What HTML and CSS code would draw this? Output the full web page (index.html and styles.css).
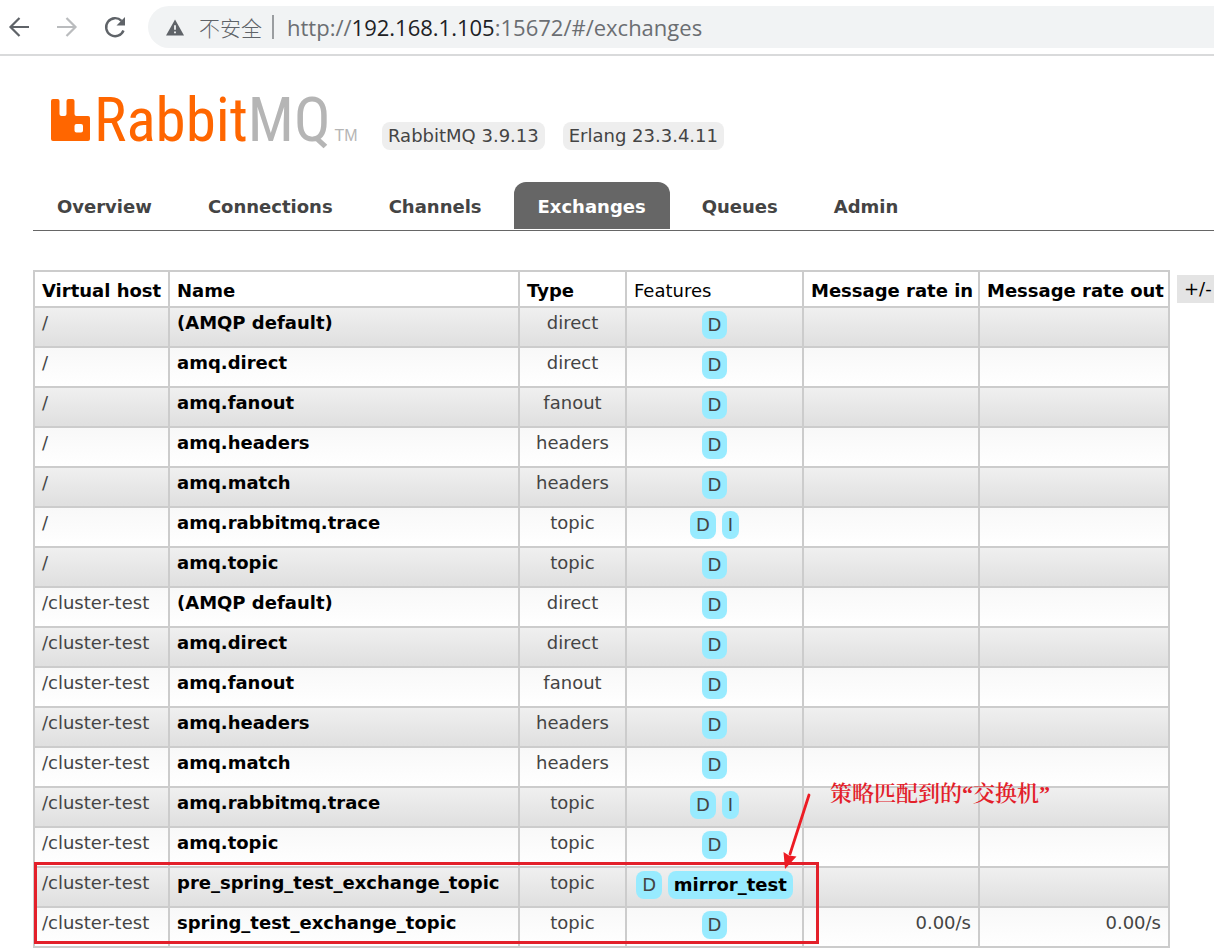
FILE: index.html
```html
<!DOCTYPE html>
<html lang="en">
<head>
<meta charset="utf-8">
<title>RabbitMQ Management</title>
<link rel="stylesheet" href="styles.css">
</head>
<body>
<div class="toolbar">
  <button class="tool" type="button" aria-label="Back"><svg width="24" height="24" viewBox="0 0 24 24" fill="none" stroke="#5f6368" stroke-width="2.2"><path d="M22 12H4M12.500 3L3.500 12l9 9"/></svg></button>
  <button class="tool" type="button" aria-label="Forward"><svg width="24" height="24" viewBox="0 0 24 24" fill="none" stroke="#babcbe" stroke-width="2.2"><path d="M2 12h18M11.500 3l9 9-9 9"/></svg></button>
  <button class="tool" type="button" aria-label="Reload"><svg width="24" height="24" viewBox="0 0 24 24" fill="none" stroke="#5f6368" stroke-width="2.400"><path d="M20.500 15.500A9 9 0 1 1 18.500 5.800"/><path d="M22 2v8.500h-8.500z" fill="#5f6368" stroke="none"/></svg></button>
  <div class="address">
    <svg class="warn" width="18" height="17" viewBox="0 0 20 18"><path fill="#5f6368" d="M10 0l10 18H0z"/><path stroke="#f1f3f4" stroke-width="2" d="M10 6.500v5M10 13.500v2"/></svg>
    <span class="insecure">不安全</span>
    <span class="divider"></span>
    <span class="url">http://<b>192.168.1.105</b>:15672/#/exchanges</span>
  </div>
</div>

<div class="page">
  <header class="head">
    <a class="logo" href="#/" aria-label="RabbitMQ">
      <svg width="40" height="43" viewBox="0 0 40 43"><path fill="#f60" fill-rule="evenodd" d="M2 0h4.500a2 2 0 0 1 2 2v13a2 2 0 0 0 2 2h3a2 2 0 0 0 2-2V2a2 2 0 0 1 2-2h4a2 2 0 0 1 2 2v13a2 2 0 0 0 2 2H37a2 2 0 0 1 2 2v21a2 2 0 0 1-2 2H2a2 2 0 0 1-2-2V2a2 2 0 0 1 2-2zM25.500 25a2 2 0 0 0-2 2v4.500a2 2 0 0 0 2 2H30a2 2 0 0 0 2-2V27a2 2 0 0 0-2-2z"/></svg>
      <span class="word">Rabbit<span class="mq">MQ</span></span><span class="tm">TM</span>
    </a>
    <span class="version">RabbitMQ 3.9.13</span>
    <span class="version">Erlang 23.3.4.11</span>
  </header>

  <nav class="tabs">
    <a href="#/">Overview</a>
    <a href="#/connections">Connections</a>
    <a href="#/channels">Channels</a>
    <a class="selected" href="#/exchanges">Exchanges</a>
    <a href="#/queues">Queues</a>
    <a href="#/users">Admin</a>
  </nav>

  <main class="listing">
    <div class="table-area">
      <table class="list">
        <colgroup><col class="c-host"><col class="c-name"><col class="c-type"><col class="c-feat"><col class="c-in"><col class="c-out"></colgroup>
        <thead>
          <tr><th><a href="#vhost">Virtual host</a></th><th><a href="#name">Name</a></th><th><a href="#type">Type</a></th><th class="plain">Features</th><th><a href="#in">Message rate in</a></th><th><a href="#out">Message rate out</a></th></tr>
        </thead>
        <tbody>
          <tr><td>/</td><td><a href="#e1">(AMQP default)</a></td><td class="c">direct</td><td class="c"><span class="tag">D</span></td><td class="r"></td><td class="r"></td></tr>
          <tr><td>/</td><td><a href="#e2">amq.direct</a></td><td class="c">direct</td><td class="c"><span class="tag">D</span></td><td class="r"></td><td class="r"></td></tr>
          <tr><td>/</td><td><a href="#e3">amq.fanout</a></td><td class="c">fanout</td><td class="c"><span class="tag">D</span></td><td class="r"></td><td class="r"></td></tr>
          <tr><td>/</td><td><a href="#e4">amq.headers</a></td><td class="c">headers</td><td class="c"><span class="tag">D</span></td><td class="r"></td><td class="r"></td></tr>
          <tr><td>/</td><td><a href="#e5">amq.match</a></td><td class="c">headers</td><td class="c"><span class="tag">D</span></td><td class="r"></td><td class="r"></td></tr>
          <tr><td>/</td><td><a href="#e6">amq.rabbitmq.trace</a></td><td class="c">topic</td><td class="c"><span class="tag">D</span> <span class="tag">I</span></td><td class="r"></td><td class="r"></td></tr>
          <tr><td>/</td><td><a href="#e7">amq.topic</a></td><td class="c">topic</td><td class="c"><span class="tag">D</span></td><td class="r"></td><td class="r"></td></tr>
          <tr><td>/cluster-test</td><td><a href="#e8">(AMQP default)</a></td><td class="c">direct</td><td class="c"><span class="tag">D</span></td><td class="r"></td><td class="r"></td></tr>
          <tr><td>/cluster-test</td><td><a href="#e9">amq.direct</a></td><td class="c">direct</td><td class="c"><span class="tag">D</span></td><td class="r"></td><td class="r"></td></tr>
          <tr><td>/cluster-test</td><td><a href="#e10">amq.fanout</a></td><td class="c">fanout</td><td class="c"><span class="tag">D</span></td><td class="r"></td><td class="r"></td></tr>
          <tr><td>/cluster-test</td><td><a href="#e11">amq.headers</a></td><td class="c">headers</td><td class="c"><span class="tag">D</span></td><td class="r"></td><td class="r"></td></tr>
          <tr><td>/cluster-test</td><td><a href="#e12">amq.match</a></td><td class="c">headers</td><td class="c"><span class="tag">D</span></td><td class="r"></td><td class="r"></td></tr>
          <tr><td>/cluster-test</td><td><a href="#e13">amq.rabbitmq.trace</a></td><td class="c">topic</td><td class="c"><span class="tag">D</span> <span class="tag">I</span></td><td class="r"></td><td class="r"></td></tr>
          <tr><td>/cluster-test</td><td><a href="#e14">amq.topic</a></td><td class="c">topic</td><td class="c"><span class="tag">D</span></td><td class="r"></td><td class="r"></td></tr>
          <tr><td>/cluster-test</td><td><a href="#e15">pre_spring_test_exchange_topic</a></td><td class="c">topic</td><td class="c"><span class="tag">D</span> <span class="tag"><a href="#policy">mirror_test</a></span></td><td class="r"></td><td class="r"></td></tr>
          <tr><td>/cluster-test</td><td><a href="#e16">spring_test_exchange_topic</a></td><td class="c">topic</td><td class="c"><span class="tag">D</span></td><td class="r">0.00/s</td><td class="r">0.00/s</td></tr>
        </tbody>
      </table>
      <div class="mark-box"></div>
      <svg class="mark-arrow" width="34" height="80" viewBox="0 0 34 80"><path d="M28 4L9 63" fill="none" stroke="#ed1c24" stroke-width="2.800" stroke-linecap="round"/><path d="M4 78L2.500 61l5.500 3.500 7.500 1z" fill="#ed1c24"/></svg>
      <p class="mark-note" lang="zh-CN">策略匹配到的“交换机”</p>
    </div>
    <button class="columns" type="button">+/-</button>
  </main>
</div>
</body>
</html>
```
FILE: styles.css
```css
* { box-sizing: border-box; }
body {
  margin: 0;
  overflow: hidden;
  background: #fff;
  color: #444;
  font: 18px/22px "DejaVu Sans", sans-serif;
}
a { color: inherit; text-decoration: none; }
button { border: 0; font: inherit; }

.toolbar {
  display: flex;
  align-items: center;
  gap: 24px;
  padding: 6px 0 6px 7px;
  border-bottom: 2px solid #d9dadb;
}
.tool { display: flex; padding: 0; background: none; }
.address {
  display: flex;
  flex: 1;
  align-items: center;
  height: 42px;
  margin-left: -3px;
  padding-left: 18px;
  border-radius: 21px 0 0 21px;
  background: #f1f3f4;
  color: #5f6368;
  font-family: "Open Sans", "Noto Sans CJK SC", sans-serif;
  white-space: nowrap;
}
.insecure { margin-left: 15px; font: 300 21px/30px "Noto Sans CJK SC", sans-serif; }
.divider { width: 2px; height: 24px; margin: 0 13px 0 10px; background: #9a9da0; }
.url { font-size: 22px; line-height: 30px; color: #6b6e72; }
.url b { color: #202124; font-weight: 400; }

.page { padding: 40px 0 0 33px; }
.head {
  display: flex;
  align-items: flex-end;
  height: 54px;
  padding-left: 18px;
}
.logo { display: flex; align-items: flex-end; width: 331px; height: 54px; color: #f60; }
.logo svg { flex: none; margin: 0 3px 8px 0; }
.word { font: 61px/60px "Roboto Condensed", Roboto, sans-serif; }
.mq { color: #b5b5b5; }
.tm { margin-left: 4px; padding-bottom: 4px; color: #b5b5b5; font: 16px/20px "Liberation Sans", sans-serif; }
.version {
  margin-right: 18px;
  padding: 3px 6px;
  border-radius: 8px;
  background: #eee;
}

.tabs { display: flex; gap: 8px; margin-top: 32px; border-bottom: 1px solid #666; }
.tabs a {
  padding: 14px 24px 11px;
  margin-bottom: 1px;
  border-radius: 12px 12px 0 0;
  font-weight: 700;
}
.tabs .selected { background: #666; color: #fff; }

.listing { display: flex; align-items: flex-start; gap: 7px; padding-top: 39px; }
.table-area { position: relative; flex: none; }
.list { border-collapse: collapse; table-layout: fixed; width: 1137px; }
.c-host { width: 135px; }
.c-name { width: 350px; }
.c-type { width: 107px; }
.c-feat { width: 177px; }
.c-in { width: 176px; }
.c-out { width: 190px; }
.list th, .list td {
  border: 2px solid #ccc;
  vertical-align: top;
  white-space: nowrap;
}
.list th { padding: 8px 7px 4px; color: #000; text-align: left; }
.list .plain { font-weight: 400; }
.list td { height: 40px; padding: 4px 7px; }
.list td a { color: #000; font-weight: 700; }
.list .c { text-align: center; }
.list .r { text-align: right; }
.list tbody tr:nth-child(odd) { background: linear-gradient(#f0f0f0, #dfdfdf); }
.list tbody tr:nth-child(even) { background: linear-gradient(#f8f8f8, #fff); }
.tag {
  display: inline-block;
  margin-top: -1px;
  padding: 3px 6px;
  border-radius: 8px;
  background: #98ebff;
}
.columns { margin-top: 5px; padding: 3px 7px; background: #e4e4e4; color: #000; white-space: nowrap; }

.mark-box { position: absolute; left: 1px; bottom: 4px; width: 785px; height: 82px; border: 3px solid #e3202a; }
.mark-arrow { position: absolute; left: 748px; top: 521px; }
.mark-note {
  position: absolute;
  left: 797px;
  top: 509px;
  margin: 0;
  color: #e3202a;
  font: 600 22px/30px "Liberation Serif", "Noto Serif CJK SC", "Noto Sans CJK SC", serif;
  white-space: nowrap;
}
```
